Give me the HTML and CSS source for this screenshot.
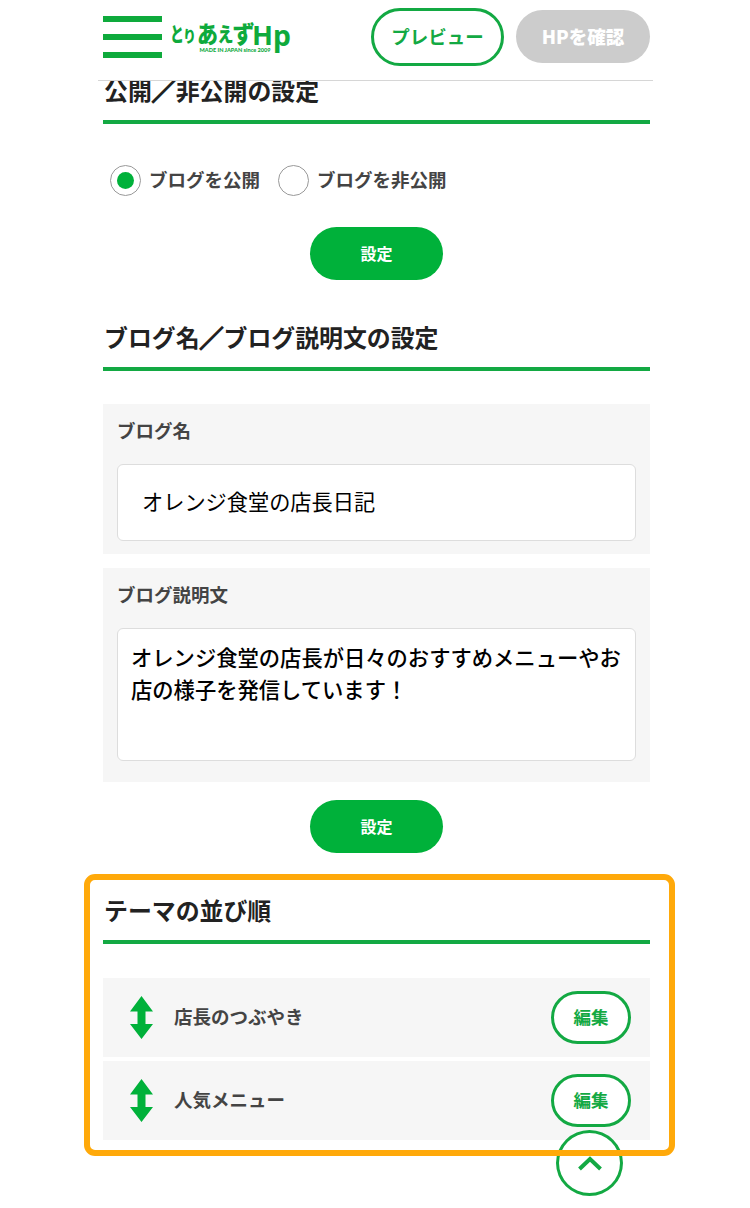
FILE: index.html
```
<!DOCTYPE html>
<html lang="ja">
<head>
    <meta charset="UTF-8">
    <meta name="viewport" content="width=device-width, initial-scale=1.0">
    <title>ブログ設定 | とりあえずHP</title>
    <link rel="stylesheet" href="styles.css">
</head>
<body>

<!-- top bar -->
<header class="header">
  <div class="menu"><span></span><span></span><span></span></div>
  <svg class="logo" width="120" height="36" viewBox="0 0 120 36">
    <text x="-2" y="23" font-size="20" textLength="14" lengthAdjust="spacingAndGlyphs">と</text>
    <text x="11" y="23" font-size="16" textLength="13" lengthAdjust="spacingAndGlyphs">り</text>
    <text x="25" y="24" font-size="24" textLength="21" lengthAdjust="spacingAndGlyphs">あ</text>
    <text x="45.500" y="23" font-size="20" textLength="16" lengthAdjust="spacingAndGlyphs">え</text>
    <text x="60.500" y="24" font-size="24" textLength="22" lengthAdjust="spacingAndGlyphs">ず</text>
    <text class="hp" x="80" y="26" font-size="27" textLength="21" lengthAdjust="spacingAndGlyphs">H</text>
    <text class="hp" x="101" y="26.500" font-size="29" textLength="18" lengthAdjust="spacingAndGlyphs">p</text>
    <text class="tag" x="27.500" y="33" font-size="5.800" textLength="71" lengthAdjust="spacingAndGlyphs">MADE IN JAPAN since 2009</text>
  </svg>
  <a class="btn preview">プレビュー</a>
  <a class="btn check">HPを確認</a>
</header>

<main class="main">

  <!-- public / private -->
  <section class="open">
    <h2>公開<span class="slash">／</span>非公開の設定</h2>
    <div class="radios">
      <label class="radio"><span class="dot on"></span><span class="radio-name">ブログを公開</span></label>
      <label class="radio"><span class="dot"></span><span class="radio-name">ブログを非公開</span></label>
    </div>
    <button class="btn set">設定</button>
  </section>

  <!-- blog name and description -->
  <section class="info">
    <h2>ブログ名<span class="slash">／</span>ブログ説明文の設定</h2>
    <div class="panel">
      <p class="label">ブログ名</p>
      <div class="field name">オレンジ食堂の店長日記</div>
    </div>
    <div class="panel desc-panel">
      <p class="label">ブログ説明文</p>
      <div class="field desc">オレンジ食堂の店長が日々のおすすめメニューやお店の様子を発信しています！</div>
    </div>
    <button class="btn set">設定</button>
  </section>

  <!-- theme order -->
  <section class="theme">
    <h2>テーマの並び順</h2>
    <div class="row">
      <svg class="arrow" width="23" height="43" viewBox="0 0 23 43"><path d="M11.500 0L23 15.500H15.500V28H23L11.500 43L0 28H7.500V15.500H0Z"/></svg>
      <span class="row-name">店長のつぶやき</span>
      <a class="btn edit">編集</a>
    </div>
    <div class="row">
      <svg class="arrow" width="23" height="43" viewBox="0 0 23 43"><path d="M11.500 0L23 15.500H15.500V28H23L11.500 43L0 28H7.500V15.500H0Z"/></svg>
      <span class="row-name">人気メニュー</span>
      <a class="btn edit">編集</a>
    </div>
    <div class="highlight"></div>
    <a class="page-top">
      <svg width="24" height="15" viewBox="0 0 24 15"><path d="M1.500 13L12 3L22.500 13"/></svg>
    </a>
  </section>

</main>
</body>
</html>
```
FILE: styles.css
```
* {
  box-sizing: border-box;
}

body {
  margin: 0;
  height: 1208px;
  overflow: hidden;
  background: #fff;
  color: #444;
  font-family: "Noto Sans CJK JP", sans-serif;
}

/* ---------- header ---------- */
.header {
  position: fixed;
  top: 0;
  left: 98px;
  z-index: 5;
  width: 555px;
  height: 81px;
  padding: 8px 3px 0 5px;
  display: flex;
  align-items: flex-start;
  background: #fff;
  border-bottom: 1px solid #d6d6d6;
}

.menu {
  width: 59px;
  margin-top: 8px;
  display: flex;
  flex-direction: column;
  gap: 12px;
}

.menu span {
  height: 6px;
  background: #0eaa3c;
}

.logo {
  margin: 11px 0 0 10px;
  overflow: visible;
  fill: #0eaa3c;
  font-weight: 900;
}

.logo .hp {
  font-family: "Noto Sans", sans-serif;
  font-weight: 700;
}

.logo .tag {
  font-family: Lato, sans-serif;
  font-weight: 900;
}

.btn {
  display: flex;
  justify-content: center;
  align-items: center;
  border: none;
  border-radius: 30px;
  font-family: inherit;
  font-weight: 700;
}

.preview {
  width: 133px;
  height: 58px;
  margin-left: 79px;
  padding-bottom: 3px;
  border: 3px solid #13a943;
  color: #13a943;
  font-size: 18.5px;
}

.check {
  width: 134px;
  height: 53px;
  margin: 2px 0 0 12px;
  padding-bottom: 2px;
  background: #ccc;
  color: #fff;
  font-size: 18.5px;
  font-weight: 900;
}

/* ---------- sections ---------- */
.main {
  width: 547px;
  margin-left: 103px;
  padding-top: 74px;
}

h2 {
  margin: 0;
  padding: 0 0 14px 1px;
  border-bottom: 4px solid #13a943;
  color: #222;
  font-size: 23.9px;
  line-height: 32px;
  font-weight: 700;
}

.slash {
  -webkit-text-stroke: 1.6px #222;
}

.radios {
  display: flex;
  gap: 18px;
  margin: 41px 0 31px 7px;
}

.radio {
  display: flex;
  align-items: center;
  font-size: 18.5px;
  line-height: 28px;
  font-weight: 700;
}

.radio-name {
  padding-bottom: 3px;
}

.dot {
  width: 31px;
  height: 31px;
  margin-right: 8px;
  display: flex;
  justify-content: center;
  align-items: center;
  border: 1px solid #999;
  border-radius: 50%;
}

.on::before {
  content: "";
  width: 17px;
  height: 17px;
  border-radius: 50%;
  background: #00b13a;
}

.set {
  width: 133px;
  height: 53px;
  margin: 0 auto;
  padding: 0 0 2px;
  background: #00b13a;
  color: #fff;
  font-size: 16px;
}

.info {
  margin-top: 41px;
}

.panel {
  height: 150px;
  margin-top: 33px;
  padding: 12px 14px;
  background: #f6f6f6;
}

.desc-panel {
  height: 214px;
  margin: 14px 0 18px;
}

.label {
  margin: 0 0 20px;
  font-size: 18.5px;
  line-height: 28px;
  font-weight: 700;
}

.field {
  background: #fff;
  border: 1px solid #ddd;
  border-radius: 6px;
  color: #000;
  font-size: 21.3px;
  line-height: 32px;
}

.name {
  height: 77px;
  padding: 20px 24px;
  font-size: 21.2px;
}

.desc {
  height: 133px;
  padding: 12px 13px;
  font-weight: 500;
}

/* ---------- theme list ---------- */
.theme {
  position: relative;
  margin-top: 41px;
}

.theme h2 {
  margin-bottom: 34px;
}

.row {
  height: 79px;
  margin-bottom: 4px;
  padding: 0 19px 0 27px;
  display: flex;
  align-items: center;
  background: #f6f6f6;
}

.arrow {
  fill: #00b13a;
}

.row-name {
  flex: 1;
  margin-left: 21px;
  padding-bottom: 3px;
  font-size: 18.5px;
  font-weight: 700;
}

.edit {
  width: 80px;
  height: 53px;
  padding-bottom: 2px;
  background: #fff;
  border: 3px solid #13a943;
  color: #13a943;
  font-size: 17.5px;
}

/* orange frame round the whole theme block */
.highlight {
  position: absolute;
  top: -20px;
  left: -19px;
  z-index: 3;
  width: 591px;
  height: 282px;
  border: 6px solid #ffa90a;
  border-radius: 11px;
}

.page-top {
  position: absolute;
  top: 236px;
  left: 453px;
  z-index: 2;
  width: 67px;
  height: 66px;
  display: flex;
  justify-content: center;
  align-items: center;
  background: #fff;
  border: 3px solid #13a943;
  border-radius: 50%;
}

.page-top path {
  fill: none;
  stroke: #13a943;
  stroke-width: 4;
}
```
